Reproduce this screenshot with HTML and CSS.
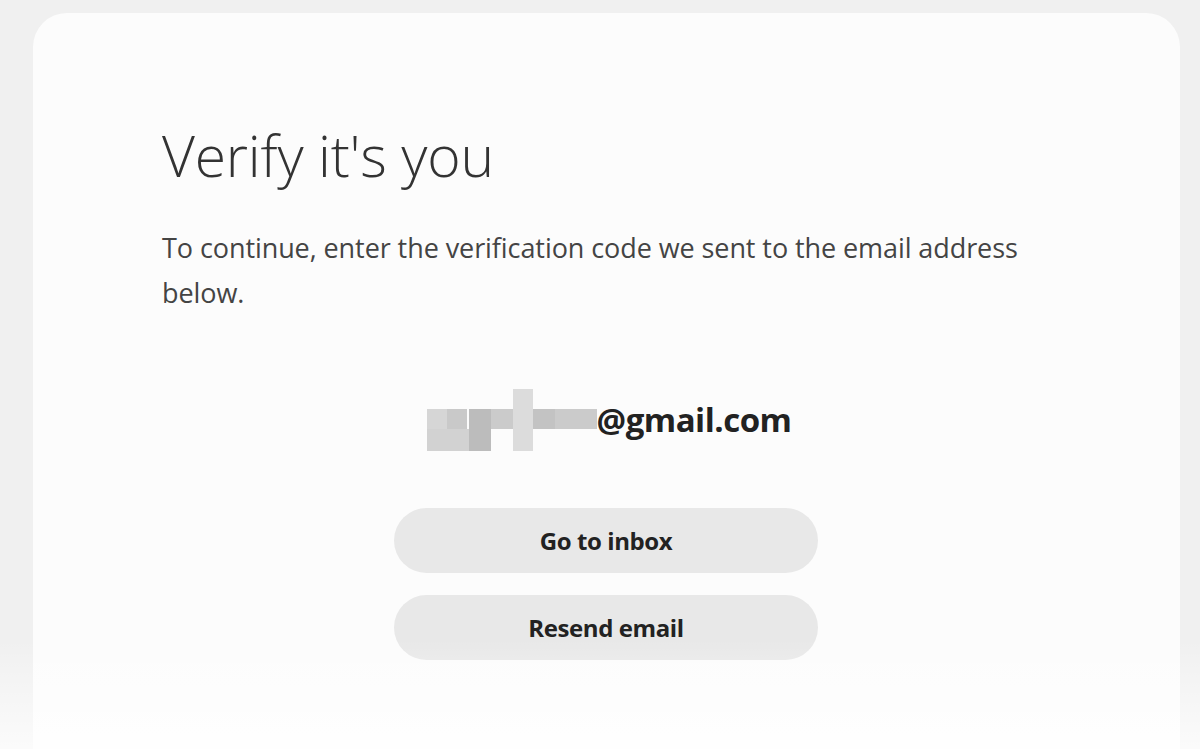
FILE: index.html
```html
<!DOCTYPE html>
<html lang="en">
<head>
<meta charset="utf-8">
<title>Verify it's you</title>
<link rel="stylesheet" href="styles.css">
</head>
<body>
<main class="card">
  <h1 class="title">Verify it's you</h1>
  <p class="lead">To continue, enter the verification code we sent to the email address below.</p>
  <div class="email-row">
    <span class="masked" aria-hidden="true">
      <span class="px px-a"></span>
      <span class="px px-b"></span>
      <span class="px px-c"></span>
      <span class="px px-d"></span>
      <span class="px px-e"></span>
      <span class="px px-f"></span>
      <span class="px px-g"></span>
    </span><span class="email">@gmail.com</span>
  </div>
  <div class="actions">
    <button class="btn" type="button">Go to inbox</button>
    <button class="btn" type="button">Resend email</button>
  </div>
</main>
<div class="fade"></div>
</body>
</html>
```
FILE: styles.css
```css
html, body {
  margin: 0;
  height: 100%;
}
body {
  background: #f0f0f0;
  font-family: "Open Sans", "Liberation Sans", sans-serif;
  overflow: hidden;
  position: relative;
}
.card {
  margin: 13px 20px 0 33px;
  height: 736px;
  box-sizing: border-box;
  background: #fcfcfc;
  border-radius: 34px 34px 0 0;
  padding: 110px 130px 0 129px;
}
.title {
  margin: 0;
  font-size: 57px;
  font-weight: 300;
  color: #333;
  line-height: 64px;
  letter-spacing: -0.2px;
}
.lead {
  margin: 38px 0 0;
  font-size: 27px;
  line-height: 45px;
  color: #444;
  max-width: 880px;
  letter-spacing: -0.08px;
}
.email-row {
  margin-top: 74px;
  height: 62px;
  display: flex;
  justify-content: center;
  align-items: center;
  padding-left: 6px;
}
.masked {
  position: relative;
  display: inline-block;
  width: 170px;
  height: 62px;
}
.px { position: absolute; display: block; }
.px-a { left: 0; top: 20px; width: 20px; height: 20px; background: #d6d6d6; }
.px-b { left: 20px; top: 20px; width: 20px; height: 20px; background: #c9c9c9; }
.px-c { left: 42px; top: 20px; width: 22px; height: 42px; background: #bcbcbc; }
.px-d { left: 0; top: 40px; width: 42px; height: 22px; background: #d2d2d2; }
.px-e { left: 64px; top: 20px; width: 106px; height: 20px; background: #cbcbcb; }
.px-f { left: 86px; top: 0; width: 20px; height: 62px; background: #dcdcdc; }
.px-g { left: 106px; top: 20px; width: 22px; height: 20px; background: #c3c3c3; }
.email {
  font-size: 33px;
  line-height: 62px;
  font-weight: 700;
  color: #222;
  letter-spacing: -0.5px;
}
.actions {
  margin-top: 57px;
  display: flex;
  flex-direction: column;
  align-items: center;
  gap: 22px;
}
.btn {
  width: 424px;
  height: 65px;
  border: none;
  border-radius: 33px;
  background: #e8e8e8;
  color: #222;
  font-family: inherit;
  font-size: 24px;
  font-weight: 700;
  letter-spacing: -0.4px;
  padding: 0;
}
.fade {
  position: absolute;
  left: 0;
  right: 0;
  bottom: 0;
  height: 110px;
  background: linear-gradient(to bottom, rgba(255,255,255,0), rgba(255,255,255,0.75));
  pointer-events: none;
}
```
